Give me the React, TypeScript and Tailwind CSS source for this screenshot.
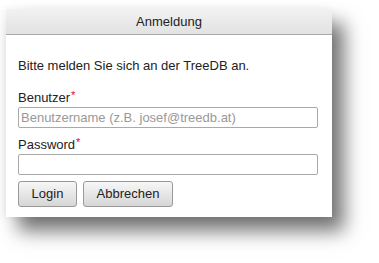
import React from "react";

export default function App() {
  return (
    <div className="w-[379px] h-[263px] bg-white pt-[9px] pl-[6px]" style={{ fontFamily: '"Liberation Sans", Arial, sans-serif' }}>
      <div className="w-[326px] h-[208px] bg-white shadow-[12px_14px_18px_rgba(0,0,0,0.55),-2px_0_8px_rgba(0,0,0,0.06)]">
        <div className="h-[26px] border-b border-[#a8a8a8] bg-gradient-to-b from-[#f2f2f2] to-[#e2e2e2] flex items-center justify-center text-[13px] text-[#222]">
          Anmeldung
        </div>
        <div className="px-[12px] text-[13px] text-[#222]">
          <div className="pt-[23px] leading-[16px]">Bitte melden Sie sich an der TreeDB an.</div>
          <div className="mt-[16px] leading-[15px]">
            Benutzer<span className="text-[#e00] text-[11px] relative -top-[3px] ml-[1px]">*</span>
          </div>
          <input
            className="mt-[1px] block w-[300px] h-[21px] border border-[#a9a9a9] rounded-[2px] px-[2px] text-[13px] text-[#222] placeholder:text-[#999] outline-none"
            placeholder="Benutzername (z.B. josef@treedb.at)"
          />
          <div className="mt-[9px] leading-[15px]">
            Password<span className="text-[#e00] text-[11px] relative -top-[3px] ml-[1px]">*</span>
          </div>
          <input
            type="password"
            className="mt-[1px] block w-[300px] h-[21px] border border-[#a9a9a9] rounded-[2px] px-[2px] outline-none"
          />
          <div className="mt-[6px] flex gap-[6px]">
            <button className="w-[59px] h-[26px] border border-[#999] rounded-[3px] bg-gradient-to-b from-[#f7f7f7] to-[#d6d6d6] text-[13px] text-[#222]">
              Login
            </button>
            <button className="w-[90px] h-[26px] border border-[#999] rounded-[3px] bg-gradient-to-b from-[#f7f7f7] to-[#d6d6d6] text-[13px] text-[#222]">
              Abbrechen
            </button>
          </div>
        </div>
      </div>
    </div>
  );
}
